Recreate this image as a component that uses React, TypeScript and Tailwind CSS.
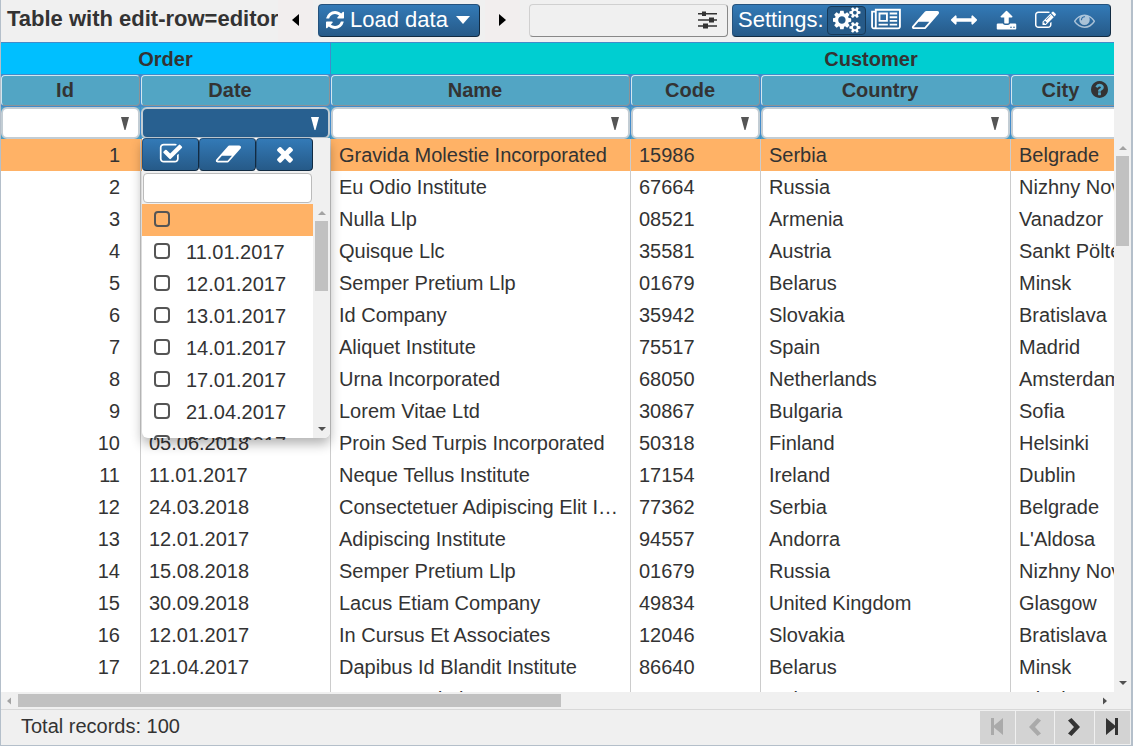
import React from "react";

const GLYPHS = {
  refresh: {
    box: "0 0 1536 1536",
    d: "M1511 928q0 5-1 7-64 268-268 434.5t-478 166.5q-146 0-282.5-55t-243.5-157l-129 129q-19 19-45 19t-45-19-19-45v-448q0-26 19-45t45-19h448q26 0 45 19t19 45-19 45l-137 137q71 66 161 102t187 36q134 0 250-65t186-179q11-17 53-117 8-23 30-23h192q13 0 22.5 9.5t9.5 22.5zm25-800v448q0 26-19 45t-45 19h-448q-26 0-45-19t-19-45 19-45l138-138q-148-137-349-137-134 0-250 65t-186 179q-11 17-53 117-8 23-30 23h-199q-13 0-22.5-9.5t-9.5-22.5v-7q65-268 270-434.5t480-166.5q146 0 284 55.5t245 156.5l130-129q19-19 45-19t45 19 19 45z",
  },
  cogs: {
    box: "0 0 1856 1792",
    d: "M832 896q0-106-75-181t-181-75-181 75-75 181 75 181 181 75 181-75 75-181zm768 512q0-52-38-90t-90-38-90 38-38 90q0 53 37.5 90.5t90.5 37.5 90.5-37.5 37.5-90.5zm0-1024q0-52-38-90t-90-38-90 38-38 90q0 53 37.5 90.5t90.5 37.5 90.5-37.5 37.5-90.5zm-384 421v185q0 10-7 19.5t-16 10.5l-155 24q-11 35-32 76 34 48 90 115 7 11 7 20 0 12-7 19-23 30-82.5 89.5t-78.5 59.5q-11 0-21-7l-115-90q-37 19-77 31-11 108-23 155-7 24-30 24h-186q-11 0-20-7.5t-10-17.5l-23-153q-34-10-75-31l-118 89q-7 7-20 7-11 0-21-8-144-133-144-160 0-9 7-19 10-14 41-53t47-61q-23-44-35-82l-152-24q-10-1-17-9.5t-7-19.5v-185q0-10 7-19.5t16-10.5l155-24q11-35 32-76-34-48-90-115-7-11-7-20 0-12 7-20 22-30 82-89t79-59q11 0 21 7l115 90q34-18 77-32 11-108 23-154 7-24 30-24h186q11 0 20 7.5t10 17.5l23 153q34 10 75 31l118-89q8-7 20-7 11 0 21 8 144 133 144 160 0 8-7 19-12 16-42 54t-45 60q23 48 34 82l152 23q10 2 17 10.5t7 19.5zm640 533v140q0 16-149 31-12 27-30 52 51 113 51 138 0 4-4 7-122 71-124 71-8 0-46-47t-52-68q-20 2-30 2t-30-2q-14 21-52 68t-46 47q-2 0-124-71-4-3-4-7 0-25 51-138-18-25-30-52-149-15-149-31v-140q0-16 149-31 13-29 30-52-51-113-51-138 0-4 4-7 4-2 35-20t59-34 30-16q8 0 46 46.5t52 67.5q20-2 30-2t30 2q51-71 92-112l6-2q4 0 124 70 4 3 4 7 0 25-51 138 17 23 30 52 149 15 149 31zm0-1024v140q0 16-149 31-12 27-30 52 51 113 51 138 0 4-4 7-122 71-124 71-8 0-46-47t-52-68q-20 2-30 2t-30-2q-14 21-52 68t-46 47q-2 0-124-71-4-3-4-7 0-25 51-138-18-25-30-52-149-15-149-31v-140q0-16 149-31 13-29 30-52-51-113-51-138 0-4 4-7 4-2 35-20t59-34 30-16q8 0 46 46.5t52 67.5q20-2 30-2t30 2q51-71 92-112l6-2q4 0 124 70 4 3 4 7 0 25-51 138 17 23 30 52 149 15 149 31z",
  },
  news: {
    box: "0 0 2048 1792",
    d: "M1024 512h-384v384h384v-384zm128 640v128h-640v-128h640zm0-768v640h-640v-640h640zm640 768v128h-512v-128h512zm0-256v128h-512v-128h512zm0-256v128h-512v-128h512zm0-256v128h-512v-128h512zm-1536 960v-960h-128v960q0 26 19 45t45 19 45-19 19-45zm1664 0v-1088h-1536v1088q0 33-11 64h1483q26 0 45-19t19-45zm128-1216v1216q0 80-56 136t-136 56h-1664q-80 0-136-56t-56-136v-1088h256v-128h1792z",
  },
  eraser: {
    box: "0 0 1984 1792",
    d: "M960 1408l336-384h-768l-336 384h768zm1013-1077q15 34 9.5 71.5t-30.5 65.5l-896 1024q-38 44-96 44h-768q-38 0-69.5-20.5t-47.5-54.5q-15-34-9.5-71.5t30.5-65.5l896-1024q38-44 96-44h768q38 0 69.5 20.5t47.5 54.5z",
  },
  arrows: {
    box: "0 0 1792 1792",
    d: "M1792 896q0 26-19 45l-256 256q-19 19-45 19t-45-19-19-45v-128h-1024v128q0 26-19 45t-45 19-45-19l-256-256q-19-19-19-45t19-45l256-256q19-19 45-19t45 19 19 45v128h1024v-128q0-26 19-45t45-19 45 19l256 256q19 19 19 45z",
  },
  upload: {
    box: "0 0 1792 1792",
    d: "M1344 1472q0-26-19-45t-45-19-45 19-19 45 19 45 45 19 45-19 19-45zm256 0q0-26-19-45t-45-19-45 19-19 45 19 45 45 19 45-19 19-45zm128-224v320q0 40-28 68t-68 28h-1472q-40 0-68-28t-28-68v-320q0-40 28-68t68-28h427q21 56 70.5 92t110.5 36h256q61 0 110.5-36t70.5-92h427q40 0 68 28t28 68zm-325-648q-17 40-59 40h-256v448q0 26-19 45t-45 19h-256q-26 0-45-19t-19-45v-448h-256q-42 0-59-40-17-39 14-69l448-448q18-19 45-19t45 19l448 448q31 30 14 69z",
  },
  edit: {
    box: "0 0 1792 1792",
    d: "M888 1184l116-116-152-152-116 116v56h96v96h56zm440-720q-16-16-33 1l-350 350q-17 17-1 33t33-1l350-350q17-17 1-33zm80 594v190q0 119-84.5 203.5t-203.5 84.5h-832q-119 0-203.5-84.5t-84.5-203.5v-832q0-119 84.5-203.5t203.5-84.5h832q63 0 117 25 15 7 18 23 3 17-9 29l-49 49q-14 14-32 8-23-6-45-6h-832q-66 0-113 47t-47 113v832q0 66 47 113t113 47h832q66 0 113-47t47-113v-126q0-13 9-22l64-64q15-15 35-7t20 29zm-96-738l288 288-672 672h-288v-288zm444 132l-92 92-288-288 92-92q28-28 68-28t68 28l152 152q28 28 28 68t-28 68z",
  },
  eye: {
    box: "0 0 1792 1792",
    d: "M1664 960q-152-236-381-353 61 104 61 225 0 185-131.5 316.5t-316.5 131.5-316.5-131.5-131.5-316.5q0-121 61-225-229 117-381 353 133 205 333.5 326.5t434.5 121.5 434.5-121.5 333.5-326.5zm-720-384q0-20-14-34t-34-14q-125 0-214.5 89.5t-89.5 214.5q0 20 14 34t34 14 34-14 14-34q0-86 61-147t147-61q20 0 34-14t14-34zm848 384q0 34-20 69-140 230-376.5 368.5t-499.5 138.5-499.5-139-376.5-368q-20-35-20-69t20-69q140-229 376.5-368t499.5-139 499.5 139 376.5 368q20 35 20 69z",
  },
  check: {
    box: "0 0 1792 1792",
    d: "M1472 930v318q0 119-84.5 203.5t-203.5 84.5h-832q-119 0-203.5-84.5t-84.5-203.5v-832q0-119 84.5-203.5t203.5-84.5h832q63 0 117 25 15 7 18 23 3 17-9 29l-49 49q-10 10-23 10-3 0-9-2-23-6-45-6h-832q-66 0-113 47t-47 113v832q0 66 47 113t113 47h832q66 0 113-47t47-113v-254q0-13 9-22l64-64q10-10 23-10 6 0 12 3 20 8 20 29zm231-489l-814 814q-24 24-57 24t-57-24l-430-430q-24-24-24-57t24-57l110-110q24-24 57-24t57 24l263 263 647-647q24-24 57-24t57 24l110 110q24 24 24 57t-24 57z",
  },
  times: {
    box: "0 0 1792 1792",
    d: "M1490 1322q0 40-28 68l-136 136q-28 28-68 28t-68-28l-294-294-294 294q-28 28-68 28t-68-28l-136-136q-28-28-28-68t28-68l294-294-294-294q-28-28-28-68t28-68l136-136q28-28 68-28t68 28l294 294 294-294q28-28 68-28t68 28l136 136q28 28 28 68t-28 68l-294 294 294 294q28 28 28 68z",
  },
  question: {
    box: "128 128 1536 1536",
    d: "M1024 1376v-192q0-14-9-23t-23-9h-192q-14 0-23 9t-9 23v192q0 14 9 23t23 9h192q14 0 23-9t9-23zm256-672q0-88-55.5-163t-138.5-116-170-41q-243 0-371 213-15 24 8 42l132 100q7 6 19 6 16 0 25-12 53-68 86-92 34-24 86-24 48 0 85.5 26t37.5 59q0 38-20 61t-68 45q-63 28-115.5 86.5t-52.5 125.5v36q0 14 9 23t23 9h192q14 0 23-9t9-23q0-19 21.5-49.5t54.5-49.5q32-18 49-28.5t46-35 44.5-48 28-60.5 12.5-81zm384 192q0 209-103 385.5t-279.5 279.5-385.5 103-385.5-103-279.5-279.5-103-385.5 103-385.5 279.5-279.5 385.5-103 385.5 103 279.5 279.5 103 385.5z",
  },
  caret: { box: "0 0 14 8", d: "M0 0h14l-7 8z" },
  left: { box: "0 0 7 12", d: "M7 0v12L0 6z" },
  right: { box: "0 0 7 12", d: "M0 0v12l7-6z" },
  up: { box: "0 0 8 4", d: "M4 0l4 4H0z" },
  down: { box: "0 0 8 4", d: "M0 0h8L4 4z" },
  filter: { box: "0 0 8 13", d: "M0 0h8L4.500 13h-1z" },
  sliders: {
    box: "0 0 20 18",
    d: "M0 2h4V0.500h4V2h11v1.500H8V5H4V3.500H0zM0 8.200h11V6.500h5v1.700h3v1.600h-3v1.700h-5V9.800H0zM0 14.200h5v-1.700h5v1.700h9v1.500h-9v1.700H5v-1.700H0z",
  },
  first: { box: "0 0 14 17", d: "M1 0h3v7.500L13 0v17L4 9.500V17H1z" },
  last: { box: "0 0 14 17", d: "M13 0h-3v7.500L1 0v17l9-7.500V17h3z" },
  prev: { box: "0 0 12 18", d: "M8.500 0L12 2.500 6 9l6 6.500L8.500 18 0 9z" },
  next: { box: "0 0 12 18", d: "M3.500 0L0 2.500 6 9 0 15.500 3.500 18 12 9z" },
};

type GlyphName = keyof typeof GLYPHS;

function Glyph({ name, className }: { name: GlyphName; className: string }) {
  return (
    <svg viewBox={GLYPHS[name].box} fill="currentColor" aria-hidden="true" className={`shrink-0 ${className}`}>
      <path d={GLYPHS[name].d} />
    </svg>
  );
}

const BLUE =
  "border border-t-[#24527d] border-l-[#24527d] border-r-[#122b42] border-b-[#122b42] bg-linear-to-b from-[#337ab7] to-[#265a88] text-white";

const TOOLS: { name: GlyphName; label: string; size: string; cell: string }[] = [
  { name: "cogs", label: "Options", size: "h-[26px] w-[28px]", cell: "w-[39px] rounded border border-[#173a59] bg-[#265a88]" },
  { name: "news", label: "Columns", size: "h-[26px] w-[30px]", cell: "w-[39px]" },
  { name: "eraser", label: "Clear", size: "h-[26px] w-[28px]", cell: "w-[39px]" },
  { name: "arrows", label: "Fit width", size: "h-[26px] w-[26px]", cell: "w-[39px]" },
  { name: "upload", label: "Export", size: "h-[21px] w-[21px]", cell: "ml-1 w-[39px]" },
  { name: "edit", label: "Edit", size: "h-[21px] w-[21px]", cell: "w-[39px]" },
  { name: "eye", label: "View", size: "h-[21px] w-[21px] opacity-60", cell: "w-[39px]" },
];

function Toolbar() {
  return (
    <header className="flex h-[42px] shrink-0 items-center bg-[#f0f0f0] text-[22px]">
      <h1 className="w-[277px] shrink-0 pb-1 pl-[6px] font-bold whitespace-nowrap">Table with edit-row=editor</h1>
      <button aria-label="Previous" className="flex h-full w-[35px] items-center justify-center bg-[#f2eeee] pb-[2px] text-black">
        <Glyph name="left" className="h-3 w-[7px]" />
      </button>
      <button className={`mx-[5px] mb-[2px] flex h-[33px] w-[162px] shrink-0 items-center rounded pl-[7px] whitespace-nowrap ${BLUE}`}>
        <Glyph name="refresh" className="h-[18px] w-[18px]" />
        <span className="mr-2 ml-[6px]">Load data</span>
        <Glyph name="caret" className="h-2 w-[14px]" />
      </button>
      <button aria-label="Next" className="flex h-full w-[35px] items-center justify-center bg-[#f2eeee] pb-[2px] text-black">
        <Glyph name="right" className="h-3 w-[7px]" />
      </button>
      <label className="mb-[2px] ml-[9px] flex h-[33px] min-w-[120px] flex-1 items-center rounded border border-t-[#d0d0d0] border-r-[#888] border-b-[#888] border-l-[#d0d0d0] pr-[9px]">
        <input aria-label="Search" className="min-w-0 flex-1 bg-transparent px-2 outline-none" />
        <Glyph name="sliders" className="h-[18px] w-5" />
      </label>
      <div className={`mr-5 mb-[2px] ml-1 flex h-[33px] w-[379px] shrink-0 items-center rounded pl-[5px] ${BLUE}`}>
        <span className="w-[89px] shrink-0">Settings:</span>
        {TOOLS.map((t) => (
          <button key={t.name} aria-label={t.label} className={`flex h-[29px] shrink-0 items-center justify-center ${t.cell}`}>
            <Glyph name={t.name} className={t.size} />
          </button>
        ))}
      </div>
    </header>
  );
}

const ROWS = [
  [1, "14.03.2018", "Gravida Molestie Incorporated", "15986", "Serbia", "Belgrade"],
  [2, "21.04.2017", "Eu Odio Institute", "67664", "Russia", "Nizhny Novgorod"],
  [3, "13.01.2017", "Nulla Llp", "08521", "Armenia", "Vanadzor"],
  [4, "17.01.2017", "Quisque Llc", "35581", "Austria", "Sankt Pölten"],
  [5, "14.01.2017", "Semper Pretium Llp", "01679", "Belarus", "Minsk"],
  [6, "11.01.2017", "Id Company", "35942", "Slovakia", "Bratislava"],
  [7, "12.01.2017", "Aliquet Institute", "75517", "Spain", "Madrid"],
  [8, "24.03.2018", "Urna Incorporated", "68050", "Netherlands", "Amsterdam"],
  [9, "30.09.2018", "Lorem Vitae Ltd", "30867", "Bulgaria", "Sofia"],
  [10, "05.06.2018", "Proin Sed Turpis Incorporated", "50318", "Finland", "Helsinki"],
  [11, "11.01.2017", "Neque Tellus Institute", "17154", "Ireland", "Dublin"],
  [12, "24.03.2018", "Consectetuer Adipiscing Elit Incorporated", "77362", "Serbia", "Belgrade"],
  [13, "12.01.2017", "Adipiscing Institute", "94557", "Andorra", "L'Aldosa"],
  [14, "15.08.2018", "Semper Pretium Llp", "01679", "Russia", "Nizhny Novgorod"],
  [15, "30.09.2018", "Lacus Etiam Company", "49834", "United Kingdom", "Glasgow"],
  [16, "12.01.2017", "In Cursus Et Associates", "12046", "Slovakia", "Bratislava"],
  [17, "21.04.2017", "Dapibus Id Blandit Institute", "86640", "Belarus", "Minsk"],
  [18, "24.08.2018", "Sem Foundation", "04040", "Belarus", "Minsk"],
];

const COLUMNS = ["Id", "Date", "Name", "Code", "Country", "City"];

function DataTable() {
  return (
    <table className="w-[1410px] table-fixed border-separate border-spacing-0">
      <colgroup>
        <col className="w-[140px]" />
        <col className="w-[190px]" />
        <col className="w-[300px]" />
        <col className="w-[130px]" />
        <col className="w-[250px]" />
        <col className="w-[140px]" />
        <col className="w-[260px]" />
      </colgroup>
      <thead>
        <tr className="h-8">
          <th colSpan={2} className="border-t border-r border-[#428bca] bg-[#00bfff] p-0">Order</th>
          <th colSpan={5} className="border-t border-[#428bca] bg-[#00ced1] p-0">Customer</th>
        </tr>
        <tr className="h-8">
          {COLUMNS.map((c) => (
            <th key={c} className="border-t border-r border-[#428bca] bg-[#428bca] p-0">
              <div className="flex h-[31px] items-center justify-center gap-3 rounded border border-t-[#d3e6ef] border-r-[#8c9296] border-b-[#8c9296] border-l-[#d3e6ef] bg-[#52a5c4] pr-[11px] pb-[2px]">
                {c}
                {c === "City" && <Glyph name="question" className="h-[17px] w-[17px]" />}
              </div>
            </th>
          ))}
          <th className="bg-[#52a5c4]" />
        </tr>
        <tr className="h-[33px]">
          {COLUMNS.map((c) => (
            <td key={c} className="border-t border-r border-[#428bca] bg-[#4b9fc6] p-0">
              <div
                className={`flex h-8 items-center rounded-md border-2 border-[#c3cdd4] pr-[9px] ${
                  c === "Date" ? "bg-[#286090] text-white" : "bg-white text-[#555]"
                }`}
              >
                <input aria-label={`Filter ${c}`} className="min-w-0 flex-1 bg-transparent px-1 outline-none" />
                <button aria-label={`Filter menu ${c}`} className="shrink-0">
                  <Glyph name="filter" className="h-[13px] w-2" />
                </button>
              </div>
            </td>
          ))}
          <td className="bg-white" />
        </tr>
      </thead>
      <tbody>
        {ROWS.map((row, r) => (
          <tr key={r} className={r === 0 ? "h-8 bg-[#ffb266]" : "h-8 bg-white"}>
            {row.map((value, c) => (
              <td
                key={c}
                className={`truncate border-r border-[#ccc] py-0 leading-[32px] ${c === 0 ? "pr-5 text-right" : "px-2"}`}
              >
                {value}
              </td>
            ))}
            <td />
          </tr>
        ))}
      </tbody>
    </table>
  );
}

const DATES = ["", "11.01.2017", "12.01.2017", "13.01.2017", "14.01.2017", "17.01.2017", "21.04.2017", "29.06.2017"];

function DateFilter() {
  return (
    <div className="absolute top-24 left-[141px] flex h-[300px] w-[188px] rounded-b-md bg-white shadow-[0_6px_12px_rgba(0,0,0,0.3)]">
      <div className="flex h-[302px] min-w-0 flex-1 flex-col overflow-hidden">
        <div className="grid shrink-0 grid-cols-3 bg-white">
          {(["check", "eraser", "times"] as GlyphName[]).map((name) => (
            <button key={name} aria-label={name} className={`flex h-[33px] items-center justify-center rounded pb-[2px] ${BLUE}`}>
              <Glyph name={name} className="h-6 w-[26px]" />
            </button>
          ))}
        </div>
        <div className="shrink-0 bg-[#f0f0f0] px-px pt-[2px] pb-px">
          <input
            aria-label="Find date"
            className="block h-[30px] w-full rounded border border-[#bbb] bg-white px-2 outline-none"
          />
        </div>
        <ul>
          {DATES.map((date, i) => (
            <li key={i} className={i === 0 ? "bg-[#ffb266]" : ""}>
              <label className="flex h-8 items-center gap-4 pb-[2px] pl-3">
                <input
                  type="checkbox"
                  aria-label={date || "Empty"}
                  className="h-4 w-4 shrink-0 appearance-none rounded-[4px] border-2 border-[#555]"
                />
                <span className="pt-px">{date}</span>
              </label>
            </li>
          ))}
        </ul>
      </div>
      <div className="flex w-[17px] shrink-0 flex-col items-center rounded-br-md bg-[#f0f0f0] pt-[73px] pb-[7px]">
        <Glyph name="up" className="h-1 w-2 text-[#a3a3a3]" />
        <div className="mt-[6px] h-[70px] w-[13px] bg-[#c1c1c1]" />
        <Glyph name="down" className="mt-auto h-1 w-2 text-[#505050]" />
      </div>
    </div>
  );
}

function Pager() {
  const buttons: { name: GlyphName; size: string; tone: string }[] = [
    { name: "first", size: "h-[17px] w-[14px]", tone: "w-[35px] text-[#aaa]" },
    { name: "prev", size: "h-[18px] w-3", tone: "w-[38px] text-[#aaa]" },
    { name: "next", size: "h-[18px] w-3", tone: "w-[39px] text-[#333]" },
    { name: "last", size: "h-[17px] w-[14px]", tone: "w-[35px] text-[#333]" },
  ];
  return (
    <div className="flex gap-px">
      {buttons.map((b) => (
        <button key={b.name} aria-label={b.name} className={`flex h-[33px] items-center justify-center bg-[#d3d3d3] pr-px pb-[2px] ${b.tone}`}>
          <Glyph name={b.name} className={b.size} />
        </button>
      ))}
    </div>
  );
}

export default function App() {
  return (
    <div className="h-screen bg-white pr-px pb-1 font-['Liberation_Sans',Arial,sans-serif] text-[20px] leading-6 text-[#333]">
      <main className="flex h-full flex-col border-r-2 border-b border-l border-[#b4bfca] bg-[#f0f0f0]">
        <Toolbar />
        <div className="flex min-h-0 flex-1">
          <div className="relative min-w-0 flex-1 overflow-hidden bg-white">
            <DataTable />
            <DateFilter />
          </div>
          <div className="flex w-[17px] shrink-0 flex-col items-center pt-[104px] pb-[7px]">
            <Glyph name="up" className="h-1 w-2 text-[#a3a3a3]" />
            <div className="mt-[6px] h-[90px] w-[13px] bg-[#c1c1c1]" />
            <Glyph name="down" className="mt-auto h-1 w-2 text-[#505050]" />
          </div>
        </div>
        <div className="flex h-[17px] shrink-0 items-center pr-6 pl-[6px]">
          <Glyph name="left" className="h-[8px] w-1 text-[#a3a3a3]" />
          <div className="ml-[7px] h-[13px] w-[543px] bg-[#c1c1c1]" />
          <Glyph name="right" className="ml-auto h-[8px] w-1 text-[#505050]" />
        </div>
        <footer className="flex h-9 shrink-0 items-center justify-between border-t border-[#d8d8d8] pr-px pl-5">
          <span className="pb-[3px]">Total records: 100</span>
          <Pager />
        </footer>
      </main>
    </div>
  );
}
